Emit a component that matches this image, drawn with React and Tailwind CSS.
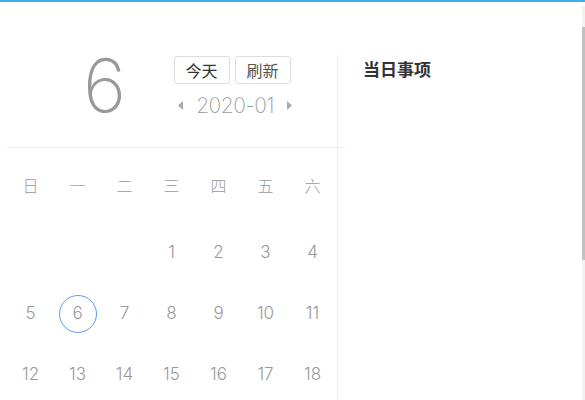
const weekdays = ['日', '一', '二', '三', '四', '五', '六'];

const weeks = [
  [null, null, null, 1, 2, 3, 4],
  [5, 6, 7, 8, 9, 10, 11],
  [12, 13, 14, 15, 16, 17, 18],
];

const thin = "font-['Inter','Noto_Sans_CJK_SC',sans-serif]";

function Arrow({ dir }) {
  return (
    <svg width="5" height="9" viewBox="0 0 5 9" className="fill-[#aaa]">
      {dir === 'left' ? <path d="M5 0 L0 4.5 L5 9 Z" /> : <path d="M0 0 L5 4.5 L0 9 Z" />}
    </svg>
  );
}

export default function App() {
  const today = 6;

  return (
    <div className="flex h-[400px] flex-col overflow-hidden border-t-2 border-[#3daee9] bg-white font-['Noto_Sans_CJK_SC',sans-serif]">
      <div className="flex flex-1">
        <div className="flex flex-1 pt-[53px]">
          <div className="w-[338px] border-r border-[#eee]">
            <div className="flex h-[92px] pl-[83px]">
              <div className={`${thin} mt-[-2px] text-[74px] font-extralight leading-[64px] text-[#999]`}>6</div>
              <div className="ml-[46px] flex flex-col items-center">
                <div className="mt-[1px] flex gap-[5px]">
                  <button className="h-[28px] rounded-[3px] border border-[#ddd] px-[11px] text-[16px] leading-none text-[#333]">
                    今天
                  </button>
                  <button className="h-[28px] rounded-[3px] border border-[#ddd] px-[11px] text-[16px] leading-none text-[#555]">
                    刷新
                  </button>
                </div>
                <div className="mt-[11px] flex items-center gap-[13px] pl-[6px]">
                  <Arrow dir="left" />
                  <span className={`${thin} text-[21px] font-extralight leading-none tracking-[-0.5px] text-[#999]`}>
                    2020-01
                  </span>
                  <Arrow dir="right" />
                </div>
              </div>
            </div>
            <div className="-mr-[8px] ml-[7px] h-px bg-[#eee]" />
            <div className="ml-[7px] mt-[6px] grid h-[62px] grid-cols-[repeat(7,47px)] items-center text-center text-[16px] font-light text-[#999]">
              {weekdays.map((w) => (
                <span key={w}>{w}</span>
              ))}
            </div>
            <div className="ml-[7px] mt-[6px]">
              {weeks.map((week, i) => (
                <div key={i} className="grid h-[61px] grid-cols-[repeat(7,47px)] items-center">
                  {week.map((d, j) => (
                    <div key={j} className="flex justify-center">
                      {d && (
                        <span
                          className={`${thin} flex h-[38px] w-[38px] items-center justify-center rounded-full text-[17px] font-light text-[#999] ${
                            d === today ? 'border border-[#5b9cf5]' : ''
                          }`}
                        >
                          {d}
                        </span>
                      )}
                    </div>
                  ))}
                </div>
              ))}
            </div>
          </div>
          <div className="flex-1 pl-[25px] pt-[1px]">
            <h2 className="text-[17px] font-bold text-[#333]">当日事项</h2>
          </div>
        </div>
        <div className="mt-[4px] flex w-[3px] flex-col bg-[#f1f1f1]">
          <div className="mt-[21px] h-[233px] bg-[#c1c1c1]" />
        </div>
      </div>
    </div>
  );
}
